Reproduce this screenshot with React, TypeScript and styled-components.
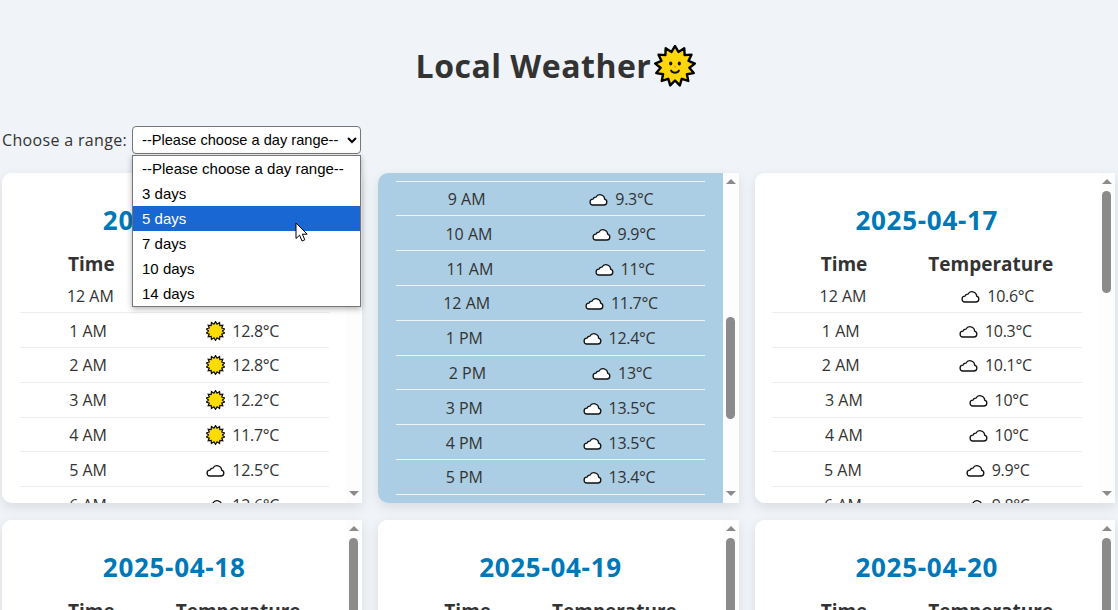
import React, { FC, useLayoutEffect, useRef, useState } from 'react';
import styled, { createGlobalStyle } from 'styled-components';

const GlobalStyle = createGlobalStyle`
  html, body {
    margin: 0;
    height: 610px;
    overflow: hidden;
    background: #f0f4f8;
  }
  * { box-sizing: border-box; }
`;

const Page = styled.div`
  padding: 44px 3px 0 2px;
  font-family: "Open Sans", "Noto Sans", sans-serif;
  color: #333;
`;

const Title = styled.h1`
  display: flex;
  justify-content: center;
  align-items: center;
  gap: 3px;
  margin: 0 5px 38px 0;
  height: 44px;
  font-size: 32px;
  line-height: 44px;
  font-weight: 700;
  letter-spacing: 0.5px;
  color: #333;
`;

const Controls = styled.div`
  display: flex;
  align-items: center;
  gap: 5px;
  height: 28px;
  margin-bottom: 19px;
`;

const RangeLabel = styled.label`
  font-size: 16px;
  letter-spacing: 0.33px;
  color: #333;
`;

const SelectWrap = styled.div`
  position: relative;
  width: 229px;
  height: 28px;
`;

const RangeSelect = styled.select`
  width: 229px;
  height: 28px;
  padding: 0 0 0 5px;
  border: 1px solid #767676;
  border-radius: 4px;
  background: #fff;
  color: #000;
  font-family: "Liberation Sans", Arial, sans-serif;
  font-size: 14.6px;
`;

const OptionList = styled.div`
  position: absolute;
  top: 29px;
  left: 0;
  z-index: 5;
  width: 229px;
  height: 152px;
  border: 1px solid #767676;
  background: #fff;
  box-shadow: 0 2px 6px rgba(0, 0, 0, 0.3);
  font-family: "Liberation Sans", Arial, sans-serif;
  font-size: 15px;
`;

const OptionRow = styled.div<{ $active?: boolean }>`
  height: 25px;
  line-height: 26px;
  padding-left: 9px;
  white-space: nowrap;
  background: ${(p) => (p.$active ? '#1967d2' : 'transparent')};
  color: ${(p) => (p.$active ? '#fff' : '#000')};
`;

const Pointer = styled.svg`
  position: absolute;
  top: 96px;
  left: 163px;
  z-index: 6;
`;

const CardGrid = styled.div`
  display: grid;
  grid-template-columns: repeat(3, 1fr);
  gap: 17px 16px;
`;

const Card = styled.div`
  display: flex;
  height: 330px;
  overflow: hidden;
  border-radius: 10px 0 0 10px;
  background: #fff;
  box-shadow: 0 4px 12px rgba(0, 0, 0, 0.1);
`;

const CardBody = styled.div<{ $hovered?: boolean }>`
  flex: 1;
  min-width: 0;
  overflow-y: hidden;
  padding: 31px 17.5px 27px;
  background: ${(p) => (p.$hovered ? '#abcee4' : '#fff')};
`;

const ScrollRail = styled.div`
  display: flex;
  flex-direction: column;
  flex: none;
  width: 16px;
  background: #fdfdfd;
`;

const ArrowCell = styled.div<{ $down?: boolean }>`
  display: flex;
  flex: none;
  justify-content: center;
  align-items: ${(p) => (p.$down ? 'flex-start' : 'flex-end')};
  height: ${(p) => (p.$down ? '9px' : '11px')};
  margin-top: ${(p) => (p.$down ? '4px' : '0')};
  margin-bottom: ${(p) => (p.$down ? '7px' : '0')};
  align-self: stretch;

  &::after {
    content: '';
    width: 0;
    height: 0;
    margin-top: ${(p) => (p.$down ? '4px' : '0')};
    border-left: 5px solid transparent;
    border-right: 5px solid transparent;
    ${(p) => (p.$down ? 'border-top: 5px solid #8b8b8b;' : 'border-bottom: 5px solid #8b8b8b;')}
  }
`;

const ScrollTrack = styled.div`
  flex: 1;
  min-height: 0;
  padding-top: 7px;
`;

const ScrollThumb = styled.div`
  width: 9px;
  margin-left: 3px;
  border-radius: 5px;
  background: #8b8b8b;
`;

const DateTitle = styled.h2`
  margin: 0 0 14px;
  height: 32px;
  font-size: 26px;
  line-height: 32px;
  font-weight: 700;
  letter-spacing: 0.7px;
  text-align: center;
  color: #0077b6;
`;

const HeadRow = styled.div`
  display: flex;
  gap: 61px;
  height: 28.4px;
  padding-left: 48.5px;
  font-size: 19px;
  line-height: 28px;
  font-weight: 700;
  color: #333;
`;

const HourRow = styled.div<{ $hovered?: boolean }>`
  display: flex;
  justify-content: space-around;
  align-items: center;
  height: 34.8px;
  padding-top: 1px;
  border-bottom: 1px solid ${(p) => (p.$hovered ? '#eef4f8' : '#eee')};
  font-size: 16px;
  color: #333;
`;

const Reading = styled.span`
  display: flex;
  align-items: center;
  gap: 7px;
  letter-spacing: -0.3px;
`;

type Sky = 'sun' | 'cloud';

const starPoints = (spikes: number, outer: number, inner: number, c: number) =>
  Array.from({ length: spikes * 2 }, (_, i) => {
    const r = i % 2 ? inner : outer;
    const a = (Math.PI * i) / spikes - Math.PI / 2;
    return `${(c + r * Math.cos(a)).toFixed(2)},${(c + r * Math.sin(a)).toFixed(2)}`;
  }).join(' ');

const SmallSun: FC = () => (
  <svg width="19" height="20" viewBox="0.5 0 19 20">
    <polygon points={starPoints(14, 9.3, 7, 10)} fill="#ffdd00" stroke="#111" strokeWidth="1.3" strokeLinejoin="miter" />
  </svg>
);

const Cloud: FC = () => (
  <svg width="19" height="20" viewBox="0.5 0 19 20">
    <path
      d="M4.6 16H15.4a3 3 0 0 0 .7-5.9A4.6 4.6 0 0 0 7.4 8.2a3.2 3.2 0 0 0-3 2A2.9 2.9 0 0 0 4.6 16Z"
      fill="#fff"
      stroke="#111"
      strokeWidth="1.3"
    />
  </svg>
);

const FaceSun: FC = () => (
  <svg width="42" height="42" viewBox="0 0 42 42">
    <polygon points={starPoints(13, 20, 14.5, 21)} fill="#ffd60a" stroke="#000" strokeWidth="2.4" strokeLinejoin="round" />
    <ellipse cx="16.7" cy="18.5" rx="1.6" ry="2.1" fill="#111" />
    <ellipse cx="25.3" cy="18.5" rx="1.6" ry="2.1" fill="#111" />
    <ellipse cx="21" cy="21.5" rx="1.4" ry="1" fill="#f7a11a" />
    <path d="M17 25.5c1.5 3 6.5 3 8 0" fill="none" stroke="#111" strokeWidth="1.8" strokeLinecap="round" />
  </svg>
);

const hourLabels = [
  ...Array.from({ length: 12 }, (_, i) => `${i === 0 ? 12 : i} AM`),
  '12 AM',
  ...Array.from({ length: 11 }, (_, i) => `${i + 1} PM`),
];

type Hour = [Sky, number];

const c = (t: number): Hour => ['cloud', t];
const s = (t: number): Hour => ['sun', t];

const forecasts: { date: string; hours: Hour[] }[] = [
  {
    date: '2025-04-15',
    hours: [s(13.1), s(12.8), s(12.8), s(12.2), s(11.7), c(12.5), c(12.6), c(12.4), c(12.9), c(13.2), c(13.8), c(14.2), c(14.6), c(15), c(15.3), c(15.1), c(14.8), c(14.3), c(13.7), c(13.2), c(12.8), c(12.1), c(11.7), c(11.2)],
  },
  {
    date: '2025-04-16',
    hours: [c(10.9), c(10.6), c(10.2), c(9.9), c(9.6), c(9.4), c(9.2), c(9), c(9.1), c(9.3), c(9.9), c(11), c(11.7), c(12.4), c(13), c(13.5), c(13.5), c(13.4), c(13), c(12.5), c(12), c(11.6), c(11.2), c(10.9)],
  },
  {
    date: '2025-04-17',
    hours: [c(10.6), c(10.3), c(10.1), c(10), c(10), c(9.9), c(9.8), c(9.8), c(10.2), c(10.8), c(11.3), c(11.9), c(12.4), c(12.9), c(13.2), c(13.4), c(13.3), c(13), c(12.6), c(12.1), c(11.7), c(11.3), c(11), c(10.7)],
  },
  {
    date: '2025-04-18',
    hours: [c(10.4), c(10.2), c(10), c(9.8), c(9.7), c(9.6), c(9.6), c(9.8), c(10.3), c(11), c(11.6), c(12.2), c(12.8), c(13.2), c(13.6), c(13.8), c(13.7), c(13.3), c(12.8), c(12.3), c(11.9), c(11.5), c(11.1), c(10.8)],
  },
  {
    date: '2025-04-19',
    hours: [c(10.6), c(10.4), c(10.3), c(10.1), c(10), c(9.9), c(10), c(10.2), c(10.8), c(11.4), c(12), c(12.7), c(13.2), c(13.7), c(14), c(14.1), c(14), c(13.6), c(13.1), c(12.6), c(12.2), c(11.8), c(11.4), c(11.1)],
  },
  {
    date: '2025-04-20',
    hours: [c(10.9), c(10.7), c(10.5), c(10.4), c(10.2), c(10.1), c(10.2), c(10.5), c(11), c(11.7), c(12.3), c(12.9), c(13.5), c(13.9), c(14.2), c(14.4), c(14.2), c(13.8), c(13.3), c(12.9), c(12.4), c(12), c(11.6), c(11.3)],
  },
];

const ranges = ['--Please choose a day range--', '3 days', '5 days', '7 days', '10 days', '14 days'];

interface DayCardProps {
  date: string;
  hours: Hour[];
  hovered?: boolean;
  scrollTop?: number;
}

const RAIL_TRACK = 298;

const DayCard: FC<DayCardProps> = ({ date, hours, hovered, scrollTop = 0 }) => {
  const ref = useRef<HTMLDivElement>(null);
  const [thumb, setThumb] = useState({ height: 101, offset: 0 });

  useLayoutEffect(() => {
    const el = ref.current;
    if (!el) return;
    el.scrollTop = scrollTop;
    const height = (RAIL_TRACK * el.clientHeight) / el.scrollHeight;
    const offset = (el.scrollTop / (el.scrollHeight - el.clientHeight)) * (RAIL_TRACK - height);
    setThumb({ height, offset });
  }, [scrollTop]);

  return (
    <Card>
      <CardBody ref={ref} $hovered={hovered}>
        <DateTitle>{date}</DateTitle>
        <HeadRow>
          <span>Time</span>
          <span>Temperature</span>
        </HeadRow>
        {hours.map(([sky, temp], i) => (
          <HourRow key={i} $hovered={hovered}>
            <span>{hourLabels[i]}</span>
            <Reading>
              {sky === 'sun' ? <SmallSun /> : <Cloud />}
              {temp}°C
            </Reading>
          </HourRow>
        ))}
      </CardBody>
      <ScrollRail>
        <ArrowCell />
        <ScrollTrack>
          <ScrollThumb style={{ height: thumb.height, marginTop: thumb.offset }} />
        </ScrollTrack>
        <ArrowCell $down />
      </ScrollRail>
    </Card>
  );
};

const App: FC = () => {
  return (
    <Page>
      <GlobalStyle />
      <Title>
        Local Weather
        <FaceSun />
      </Title>
      <Controls>
        <RangeLabel htmlFor="range">Choose a range:</RangeLabel>
        <SelectWrap>
          <RangeSelect id="range" defaultValue={ranges[0]}>
            {ranges.map((r) => (
              <option key={r}>{r}</option>
            ))}
          </RangeSelect>
          <OptionList>
            {ranges.map((r) => (
              <OptionRow key={r} $active={r === '5 days'}>
                {r}
              </OptionRow>
            ))}
          </OptionList>
          <Pointer width="14" height="21" viewBox="0 0 14 21">
            <path d="M1 1V16.5L4.6 13.2L7 19L9.8 17.8L7.4 12.2H12.2Z" fill="#fff" stroke="#000" strokeWidth="1" />
          </Pointer>
        </SelectWrap>
      </Controls>
      <CardGrid>
        {forecasts.map((f, i) => (
          <DayCard key={f.date} date={f.date} hours={f.hours} hovered={i === 1} scrollTop={i === 1 ? 410 : 0} />
        ))}
      </CardGrid>
    </Page>
  );
};

export default App;
